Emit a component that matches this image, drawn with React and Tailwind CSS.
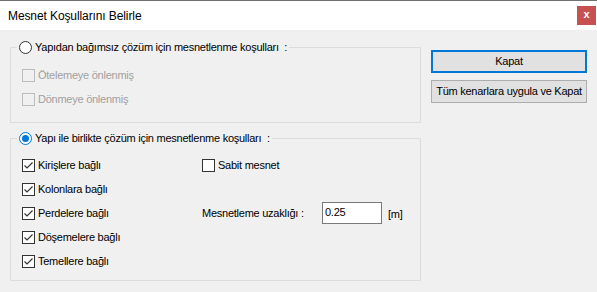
import { useState } from 'react'

const font = { fontFamily: '"Liberation Sans", Arial, sans-serif' }

function Check({ checked, disabled, onChange }) {
  return (
    <span
      onClick={disabled ? undefined : onChange}
      className={`w-[13px] h-[13px] shrink-0 border flex items-center justify-center ${disabled ? 'border-[#bcbcbc] bg-[#f0f0f0]' : 'border-[#333333] bg-white'}`}
    >
      {checked && (
        <svg width="11" height="11" viewBox="0 0 11 11">
          <path d="M1.5 5.5 L4 8 L9.5 2.5" fill="none" stroke="#333333" strokeWidth="1.2" />
        </svg>
      )}
    </span>
  )
}

function Radio({ checked, onChange }) {
  return (
    <span
      onClick={onChange}
      className={`w-[13px] h-[13px] shrink-0 rounded-full border bg-white flex items-center justify-center ${checked ? 'border-[#0078d7]' : 'border-[#333333]'}`}
    >
      {checked && <span className="w-[7px] h-[7px] rounded-full bg-[#0078d7]" />}
    </span>
  )
}

function CheckRow({ label, checked, disabled, onChange }) {
  return (
    <div className="h-[24px] flex items-center gap-[3px]">
      <Check checked={checked} disabled={disabled} onChange={onChange} />
      <span className={disabled ? 'text-[#a0a0a0]' : 'text-black'}>{label}</span>
    </div>
  )
}

export default function App() {
  const [mode, setMode] = useState('birlikte')
  const [links, setLinks] = useState({ kiris: true, kolon: true, perde: true, doseme: true, temel: true, sabit: false })
  const [dist, setDist] = useState('0.25')
  const toggle = k => setLinks(s => ({ ...s, [k]: !s[k] }))
  const bagimsiz = mode === 'bagimsiz'

  return (
    <div style={font} className="w-[597px] h-[292px] bg-[#f0f0f0] text-black text-[11px] tracking-[-0.25px] overflow-hidden border-t border-[#707070]">
      {/* title bar */}
      <div className="h-[29px] bg-white flex items-center justify-between pl-[8px] pr-[1px]">
        <span className="text-[12px] tracking-[-0.1px] pt-[1px]">Mesnet Koşullarını Belirle</span>
        <span className="w-[19px] h-[19px] bg-[#c75050] text-white text-[11px] font-bold flex items-center justify-center leading-none pb-[2px]">x</span>
      </div>

      <div className="flex">
        {/* left column */}
        <div className="ml-[10px] w-[411px] flex flex-col gap-[7px] pt-[9px]">
          <fieldset className="border border-[#dcdcdc] h-[84px]">
            <legend className="ml-[6px] px-[2px] flex items-center gap-[3px] h-[16px]">
              <Radio checked={bagimsiz} onChange={() => setMode('bagimsiz')} />
              <span>Yapıdan bağımsız çözüm için mesnetlenme koşulları&nbsp;&nbsp;:</span>
            </legend>
            <div className="pl-[11px] pt-[8px]">
              <CheckRow label="Ötelemeye önlenmiş" disabled={!bagimsiz} />
              <CheckRow label="Dönmeye önlenmiş" disabled={!bagimsiz} />
            </div>
          </fieldset>

          <fieldset className="border border-[#dcdcdc] h-[151px]">
            <legend className="ml-[6px] px-[2px] flex items-center gap-[3px] h-[16px]">
              <Radio checked={!bagimsiz} onChange={() => setMode('birlikte')} />
              <span>Yapı ile birlikte çözüm için mesnetlenme koşulları&nbsp;&nbsp;:</span>
            </legend>
            <div className="pl-[11px] pt-[7px] flex">
              <div className="w-[180px]">
                <CheckRow label="Kirişlere bağlı" checked={links.kiris} onChange={() => toggle('kiris')} />
                <CheckRow label="Kolonlara bağlı" checked={links.kolon} onChange={() => toggle('kolon')} />
                <CheckRow label="Perdelere bağlı" checked={links.perde} onChange={() => toggle('perde')} />
                <CheckRow label="Döşemelere bağlı" checked={links.doseme} onChange={() => toggle('doseme')} />
                <CheckRow label="Temellere bağlı" checked={links.temel} onChange={() => toggle('temel')} />
              </div>
              <div>
                <CheckRow label="Sabit mesnet" checked={links.sabit} onChange={() => toggle('sabit')} />
                <div className="h-[24px]" />
                <div className="h-[24px] flex items-center">
                  <span className="w-[120px]">Mesnetleme uzaklığı :</span>
                  <input
                    value={dist}
                    onChange={e => setDist(e.target.value)}
                    className="w-[60px] h-[22px] border border-[#7a7a7a] bg-white px-[2px] pb-[3px] outline-none text-[11px]"
                    style={font}
                  />
                  <span className="ml-[6px] pt-[2px]">[m]</span>
                </div>
              </div>
            </div>
          </fieldset>
        </div>

        {/* right column */}
        <div className="ml-[10px] w-[156px] pt-[20px] flex flex-col gap-[7px]">
          <button className="h-[23px] border-2 border-[#0078d7] bg-[#e1e1e1] flex items-center justify-center">Kapat</button>
          <button className="h-[23px] border border-[#adadad] bg-[#e1e1e1] flex items-center justify-center">Tüm kenarlara uygula ve Kapat</button>
        </div>
      </div>
    </div>
  )
}
